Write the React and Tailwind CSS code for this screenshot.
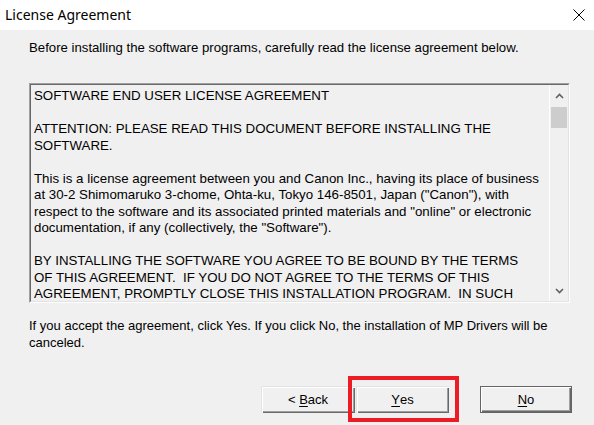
import React from "react";

const lines = [
  "SOFTWARE END USER LICENSE AGREEMENT",
  "",
  "ATTENTION: PLEASE READ THIS DOCUMENT BEFORE INSTALLING THE",
  "SOFTWARE.",
  "",
  "This is a license agreement between you and Canon Inc., having its place of business",
  'at 30-2 Shimomaruko 3-chome, Ohta-ku, Tokyo 146-8501, Japan ("Canon"), with',
  'respect to the software and its associated printed materials and "online" or electronic',
  'documentation, if any (collectively, the "Software").',
  "",
  "BY INSTALLING THE SOFTWARE YOU AGREE TO BE BOUND BY THE TERMS",
  "OF THIS AGREEMENT.  IF YOU DO NOT AGREE TO THE TERMS OF THIS",
  "AGREEMENT, PROMPTLY CLOSE THIS INSTALLATION PROGRAM.  IN SUCH",
];

function Chevron({ down }) {
  return (
    <svg width="9" height="6" viewBox="0 0 9 6">
      <path
        d={down ? "M1 1 L4.5 4.5 L8 1" : "M1 5 L4.5 1.5 L8 5"}
        fill="none"
        stroke="#606060"
        strokeWidth="1.6"
      />
    </svg>
  );
}

function Btn({ children, def, w = "w-[92px]" }) {
  return (
    <div
      className={
        w +
        " h-[27px] flex items-center justify-center bg-[#f0f0f0] text-[13px] text-black " +
        (def
          ? "border border-[#646464] shadow-[inset_1px_1px_0_#ffffff,inset_-1px_-1px_0_#696969,inset_-2px_-2px_0_#a0a0a0]"
          : "shadow-[inset_1px_1px_0_#e3e3e3,inset_2px_2px_0_#ffffff,inset_-1px_-1px_0_#696969,inset_-2px_-2px_0_#a0a0a0]")
      }
    >
      {children}
    </div>
  );
}

export default function App() {
  return (
    <div
      className="w-[594px] h-[425px] flex flex-col overflow-hidden bg-[#f0f0f0]"
      style={{ fontFamily: '"Liberation Sans", Arial, sans-serif' }}
    >
      <div className="h-[30px] bg-white flex items-center justify-between pl-[5px] pr-[9px] shrink-0">
        <span
          className="text-[14px] text-black leading-none pb-[1px]"
          style={{ fontFamily: '"Noto Sans", "Open Sans", sans-serif' }}
        >
          License Agreement
        </span>
        <svg width="12" height="12" viewBox="0 0 12 12">
          <path d="M0.5 0.5 L11.5 11.5 M11.5 0.5 L0.5 11.5" stroke="#000" strokeWidth="1" />
        </svg>
      </div>
      <div className="flex-1 flex flex-col pl-[29px] pr-[24px] pt-[10px]">
        <div className="text-[13.2px] leading-[16px] text-black">
          Before installing the software programs, carefully read the license agreement below.
        </div>
        <div className="mt-[27px] h-[220px] border border-t-[#a0a0a0] border-l-[#a0a0a0] border-r-white border-b-white">
          <div className="h-full flex border border-t-[#696969] border-l-[#696969] border-r-[#e3e3e3] border-b-[#e3e3e3] bg-[#f0f0f0]">
            <div className="flex-1 overflow-hidden pl-[3px] pt-[3px] text-[13.3px] leading-[16.5px] text-black whitespace-pre">
              {lines.map((l, i) => (
                <div key={i} className="h-[16.5px]">
                  {l}
                </div>
              ))}
            </div>
            <div className="w-[19px] flex flex-col bg-[#f0f0f0] border-l border-white">
              <div className="h-[22px] flex items-center justify-center">
                <Chevron />
              </div>
              <div className="h-[21px] bg-[#cdcdcd] mx-[1px]" />
              <div className="flex-1" />
              <div className="h-[20px] flex items-center justify-center">
                <Chevron down />
              </div>
            </div>
          </div>
        </div>
        <div className="mt-[14px] text-[13px] leading-[17px] text-black">
          If you accept the agreement, click Yes. If you click No, the installation of MP Drivers will be
          <br />
          canceled.
        </div>
        <div className="mt-[35px] flex justify-end mr-[-2px]">
          <Btn w="w-[94px]">
            &lt;&nbsp;<span className="underline underline-offset-2">B</span>ack
          </Btn>
          <div className="relative ml-[1px]">
            <Btn w="w-[93px]">
              <span className="underline underline-offset-2">Y</span>es
            </Btn>
            <div className="absolute -left-[8px] -top-[10px] -right-[10px] -bottom-[9px] border-4 border-[#ed1c24] pointer-events-none" />
          </div>
          <div className="ml-[31px]">
            <Btn def>
              <span className="underline underline-offset-2">N</span>o
            </Btn>
          </div>
        </div>
      </div>
    </div>
  );
}
